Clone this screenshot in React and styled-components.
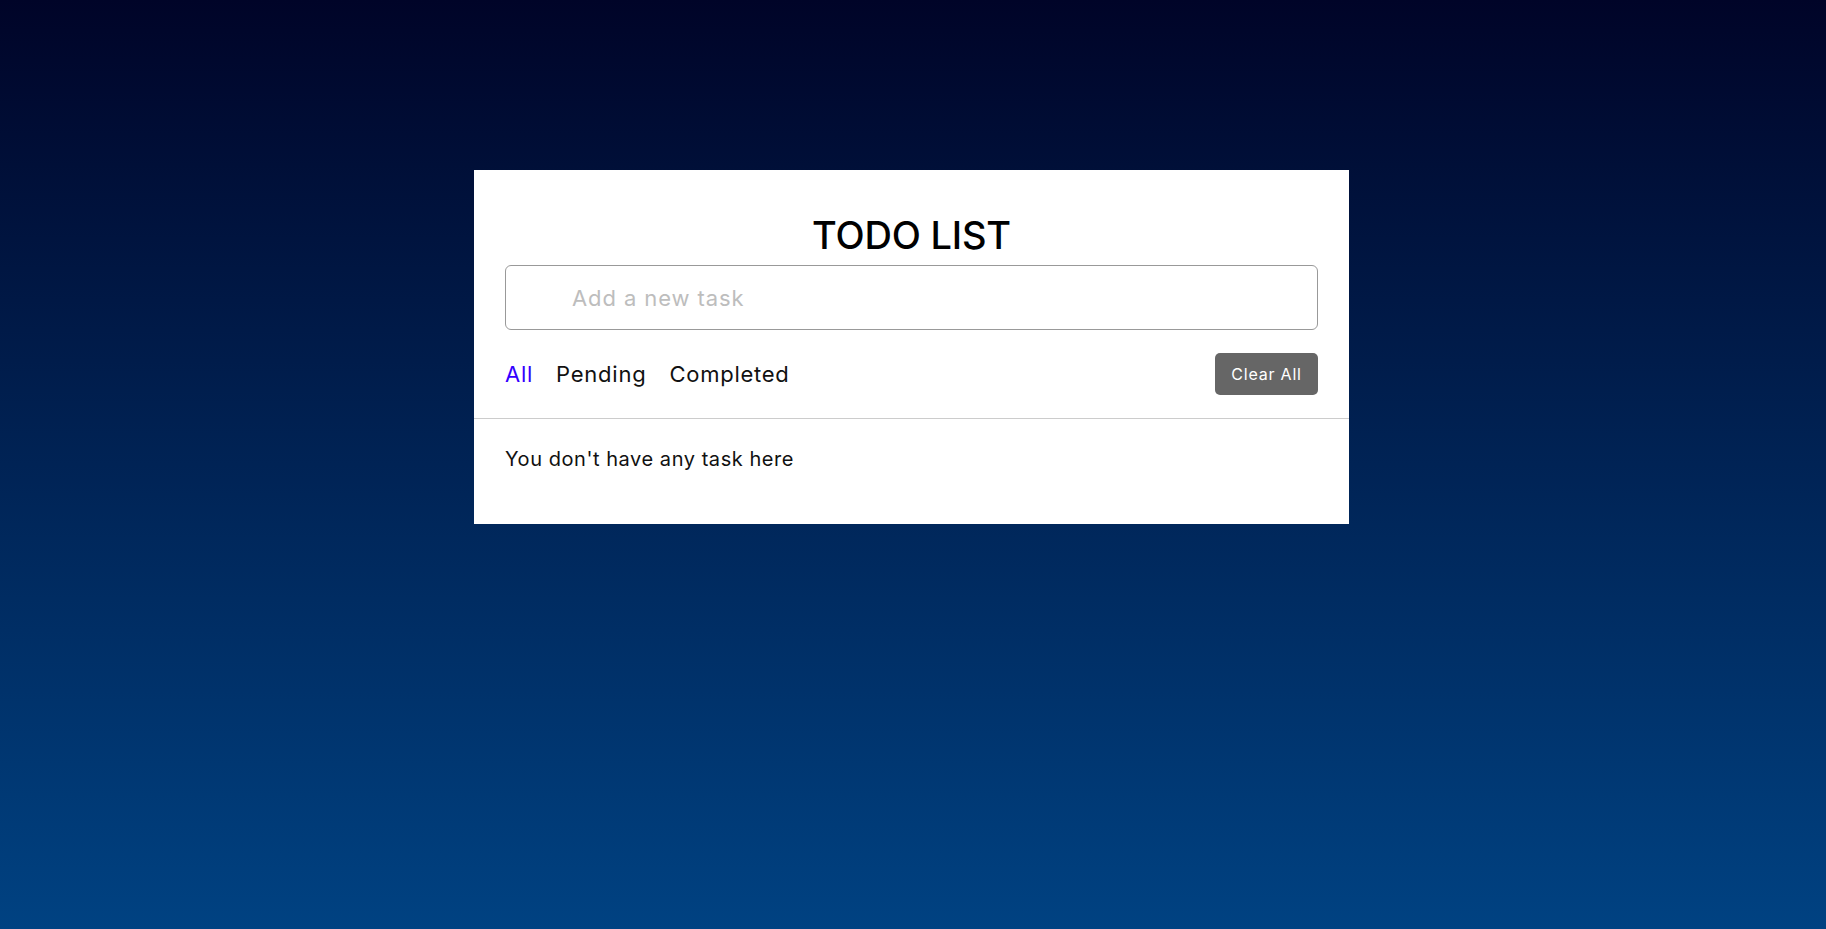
import React from "react";
import styled, { createGlobalStyle } from "styled-components";

const Global = createGlobalStyle`
  * { box-sizing: border-box; }
  html, body { margin: 0; padding: 0; }
  body { font-family: Inter, "Open Sans", sans-serif; }
`;

const Page = styled.div`
  min-height: 100vh;
  background: linear-gradient(to bottom, #000428 0%, #004282 100%);
  display: flex;
  justify-content: center;
  align-items: flex-start;
  padding-top: 170px;
`;

const Card = styled.div`
  width: 875px;
  margin-left: -3px;
  background: #fff;
  padding-top: 42px;
`;

const Header = styled.div`
  padding: 0 31px;
`;

const Title = styled.h1`
  margin: 0 0 7px;
  text-align: center;
  font-size: 38px;
  line-height: 46px;
  font-weight: 500;
  color: #000;
  letter-spacing: -0.2px;
`;

const TaskInput = styled.input`
  display: block;
  width: 100%;
  height: 65px;
  border: 1px solid #999;
  border-radius: 6px;
  padding: 0 20px 0 66px;
  font-family: inherit;
  font-size: 22px;
  letter-spacing: 0.9px;
  color: #222;
  outline: none;
  &::placeholder {
    color: #bdbdbd;
  }
`;

const Controls = styled.div`
  display: flex;
  align-items: center;
  justify-content: space-between;
  padding: 23px 31px;
  border-bottom: 1px solid #ccc;
`;

const Filters = styled.div`
  display: flex;
  align-items: center;
  gap: 23px;
`;

const Filter = styled.span`
  font-size: 22px;
  line-height: 26px;
  letter-spacing: 0.75px;
  color: ${(p) => (p.$active ? "#3300ff" : "#111")};
  cursor: pointer;
`;

const ClearButton = styled.button`
  width: 103px;
  height: 42px;
  border: none;
  border-radius: 5px;
  background: #666;
  color: #fff;
  font-family: inherit;
  font-size: 16px;
  letter-spacing: 0.8px;
  cursor: pointer;
`;

const Empty = styled.p`
  margin: 0;
  padding: 28px 31px 53px;
  font-size: 20px;
  line-height: 24px;
  letter-spacing: 0.55px;
  color: #111;
`;

export default function App() {
  return (
    <>
      <Global />
      <Page>
        <Card>
          <Header>
            <Title>TODO LIST</Title>
            <TaskInput placeholder="Add a new task" />
          </Header>
          <Controls>
            <Filters>
              <Filter $active>All</Filter>
              <Filter>Pending</Filter>
              <Filter>Completed</Filter>
            </Filters>
            <ClearButton>Clear All</ClearButton>
          </Controls>
          <Empty>You don't have any task here</Empty>
        </Card>
      </Page>
    </>
  );
}
